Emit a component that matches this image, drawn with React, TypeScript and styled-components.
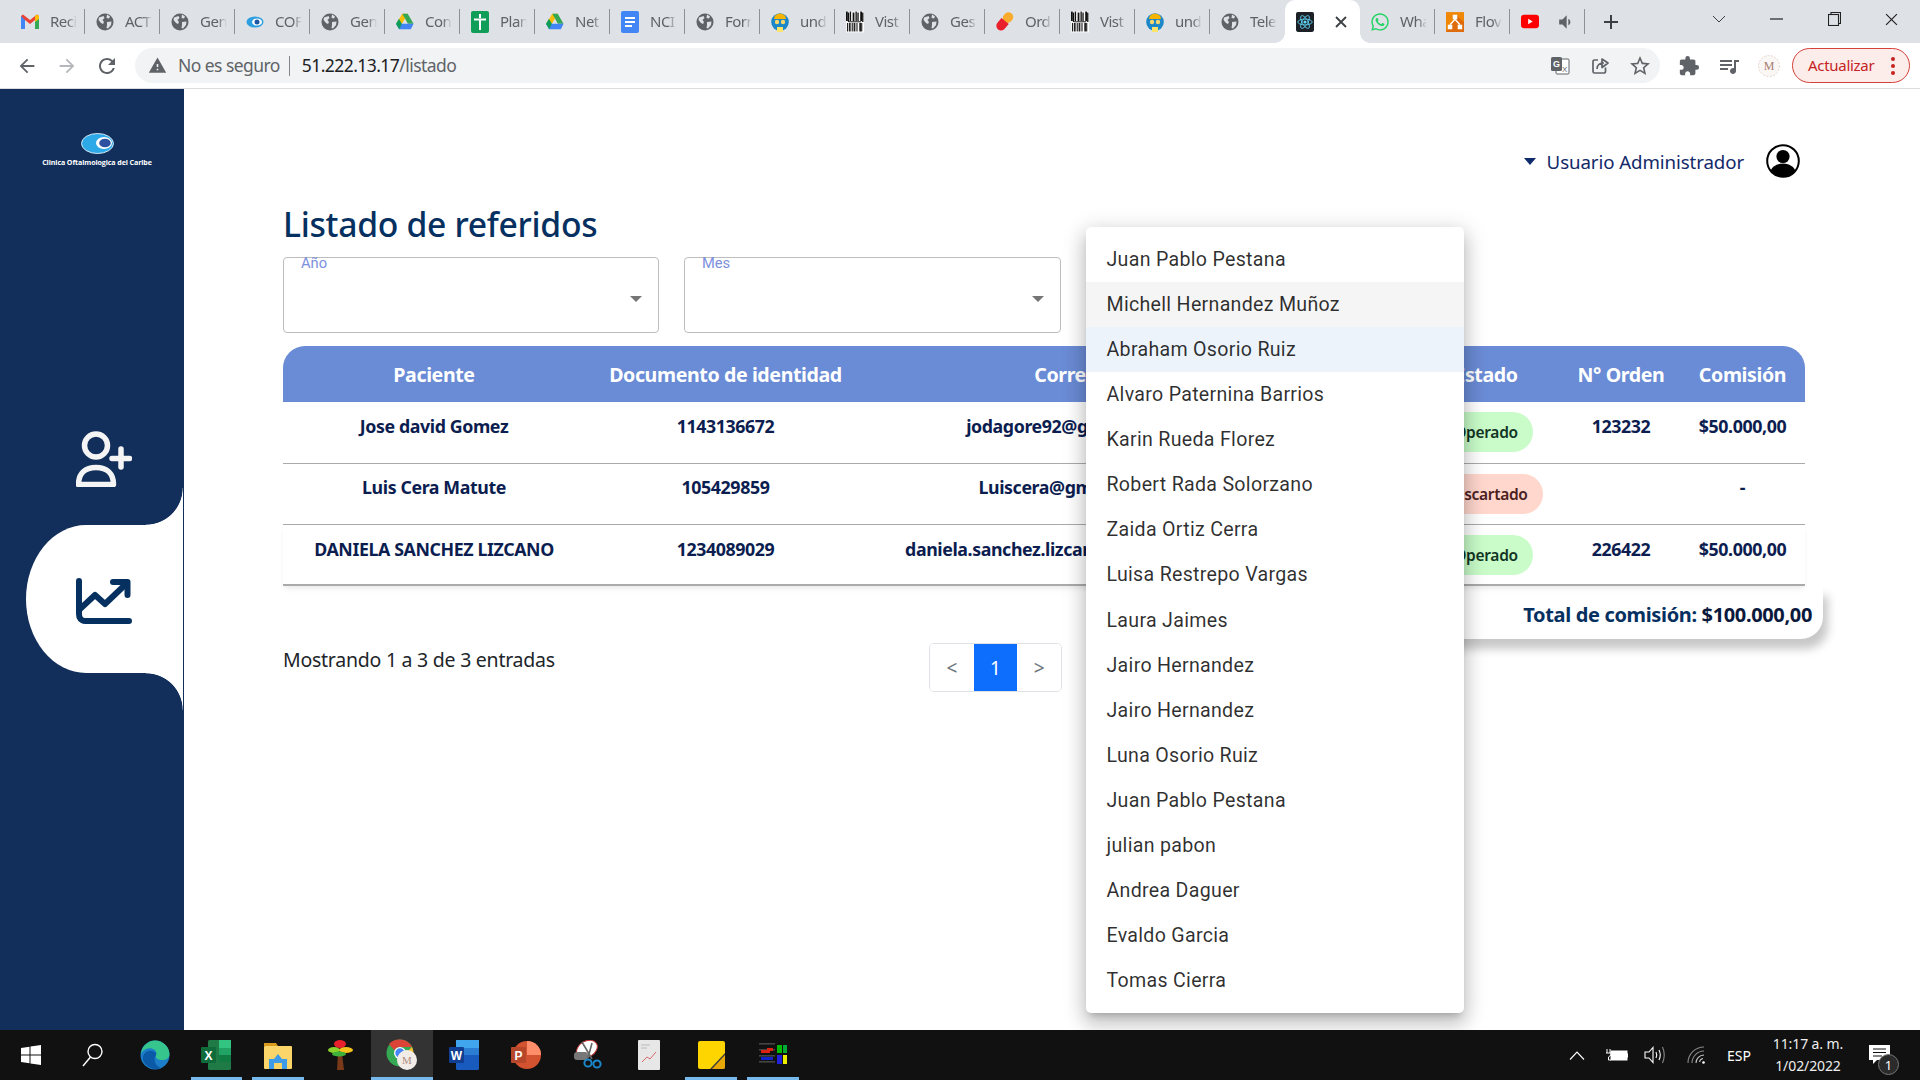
import React from 'react';
import styled, { createGlobalStyle } from 'styled-components';
import { FaWhatsapp } from 'react-icons/fa';
import { MdArrowBack, MdArrowForward, MdRefresh, MdWarning, MdStarBorder, MdExtension, MdQueueMusic, MdVolumeDown } from 'react-icons/md';

const Global = createGlobalStyle`
  html, body { margin: 0; padding: 0; width: 1920px; height: 1080px; overflow: hidden; background: #fff; }
  * { box-sizing: border-box; }
  body { font-family: "Noto Sans", "Open Sans", sans-serif; }
`;

const Page = styled.div`
  position: relative; width: 1920px; height: 1080px; display: flex; flex-direction: column; overflow: hidden;
`;

/* ---------- browser tab strip ---------- */
const TabStrip = styled.div`
  height: 43px; background: #dee1e6; display: flex; padding-left: 10px; flex: none;
`;
const Tab = styled.div<{ $active?: boolean; $noSep?: boolean }>`
  position: relative; width: 75px; height: 43px; display: flex; align-items: center; padding-left: 11px; flex: none;
  background: ${p => (p.$active ? '#fff' : 'transparent')};
  border-radius: ${p => (p.$active ? '10px 10px 0 0' : '0')};
  &::after {
    content: ''; display: ${p => (p.$noSep || p.$active ? 'none' : 'block')};
    position: absolute; right: 0; top: 9px; width: 1px; height: 25px; background: #8e9297;
  }
`;
const TabFlare = styled.span<{ $side: 'left' | 'right' }>`
  position: absolute; bottom: 0; width: 10px; height: 10px;
  ${p => (p.$side === 'left' ? 'left: -10px;' : 'right: -10px;')}
  background: radial-gradient(circle at ${p => (p.$side === 'left' ? '0 0' : '100% 0')}, transparent 9.5px, #fff 10px);
`;
const TabIconBox = styled.span`
  width: 18px; height: 18px; flex: none; display: flex; align-items: center; justify-content: center;
`;
const TabTitle = styled.span`
  margin: -2px 0 0 11px; width: 27px; overflow: hidden; white-space: nowrap; font-size: 15px; color: #5f6368;
  letter-spacing: -0.5px; -webkit-mask-image: linear-gradient(90deg, #000 65%, transparent 100%); mask-image: linear-gradient(90deg, #000 65%, transparent 100%);
`;
const TabClose = styled.span`
  margin-left: 21px; display: flex; align-items: center;
`;
const Speaker = styled.span`
  margin-left: 16px; display: flex; color: #5f6368;
`;
const NewTab = styled.span`
  margin-left: 19px; height: 43px; display: flex; align-items: center;
`;
const WindowControls = styled.div`
  margin-left: auto; display: flex;
`;
const WindowButton = styled.span`
  width: 57.3px; height: 38px; display: flex; align-items: center; justify-content: center;
`;

/* ---------- browser toolbar ---------- */
const Toolbar = styled.div`
  height: 46px; flex: none; background: #fff; border-bottom: 1px solid #dadce0; display: flex; align-items: flex-start; padding: 5px 0 0 7px;
`;
const NavButton = styled.span<{ $color?: string }>`
  width: 40px; height: 35px; display: flex; align-items: center; justify-content: center; flex: none; color: ${p => p.$color ?? '#5f6368'};
`;
const Omnibox = styled.div`
  margin-left: 8px; width: 1525px; height: 35px; background: #f1f3f4; border-radius: 18px; display: flex; align-items: center; padding-left: 13px; flex: none;
  color: #5f6368;
`;
const SecurityText = styled.span`
  margin: -2px 0 0 11px; font-size: 17.5px; color: #5f6368; letter-spacing: -0.56px;
`;
const UrlDivider = styled.span`
  width: 1px; height: 20px; background: #80868b; margin: 0 12px 0 9px;
`;
const UrlHost = styled.span`
  margin-top: -2px; font-size: 17.5px; color: #202124; letter-spacing: -0.56px;
`;
const UrlPath = styled.span`
  margin-top: -2px; font-size: 17.5px; color: #5f6368; letter-spacing: -0.56px;
`;
const OmniIcons = styled.div`
  margin-left: auto; display: flex;
`;
const Extensions = styled.div`
  margin-left: 9px; display: flex;
`;
const UpdateButton = styled.div`
  margin-left: 3px; width: 118px; height: 35px; border: 1.5px solid #d5413a; border-radius: 18px; background: #fcecea; display: flex; align-items: center;
  padding: 0 0 2px 15px; font-size: 15px; color: #c5221f; letter-spacing: -0.3px; position: relative; flex: none;
`;
const UpdateDots = styled.span`
  margin: 2px 14px 0 auto; display: flex; flex-direction: column; gap: 3px;
  i { width: 4px; height: 4px; border-radius: 50%; background: #c5221f; display: block; }
`;

/* ---------- app body ---------- */
const Body = styled.div`
  flex: 1; display: flex; min-height: 0;
`;
const Sidebar = styled.aside`
  width: 184px; flex: none; background: #122f5b; padding-top: 44px; display: flex; flex-direction: column; border-right: 1px solid #122f5b;
`;
const Logo = styled.div`
  display: flex; flex-direction: column; align-items: center; height: 36px; padding-left: 11px;
`;
const LogoName = styled.span`
  font-family: "Open Sans", sans-serif; font-size: 7.1px; font-weight: 700; color: #fff; white-space: nowrap; margin-top: 3px; letter-spacing: -0.1px;
`;
const NavPlain = styled.div`
  margin-top: 262px; padding-left: 76px; height: 56px; line-height: 0;
`;
const NavActive = styled.div`
  position: relative; margin-top: 38px; margin-left: 26px; height: 148px; background: #fff; border-radius: 60px 0 0 60px / 74px 0 0 74px;
  display: flex; align-items: center; padding: 4px 0 0 50px;
  &::before, &::after {
    content: ''; position: absolute; right: 0; width: 37px; height: 37px;
  }
  &::before { top: -37px; background: radial-gradient(ellipse 37px 37px at 0 0, transparent 98%, #fff 100%); }
  &::after { bottom: -37px; background: radial-gradient(ellipse 37px 37px at 0 100%, transparent 98%, #fff 100%); }
`;
const Main = styled.main`
  flex: 1; padding: 56px 115px 0 99px; background: #fff; min-width: 0;
`;
const UserRow = styled.div`
  height: 32px; display: flex; align-items: center; justify-content: flex-end; gap: 0; padding-right: 6px; margin-right: -1px;
`;
const UserCaret = styled.span`
  width: 0; height: 0; border-left: 6px solid transparent; border-right: 6px solid transparent; border-top: 7px solid #0f2a6b; margin-right: 11px;
`;
const UserName = styled.span`
  font-size: 18.7px; color: #12296a; margin-right: 22px; letter-spacing: -0.1px;
`;
const Title = styled.h1`
  margin: 25px 0 0; height: 44px; line-height: 44px; font-size: 33.7px; font-weight: 500; color: #06305f; letter-spacing: -0.3px; white-space: nowrap;
`;
const Filters = styled.div`
  margin-top: 11px; display: flex; gap: 25px;
`;
const Select = styled.div<{ $w: number }>`
  position: relative; width: ${p => p.$w}px; height: 76px; border: 1px solid #bdbdbd; border-radius: 4px;
`;
const SelectLabel = styled.span`
  position: absolute; left: 17px; top: -3px; font-family: Roboto, sans-serif; font-size: 14.7px; color: #7c90dd; line-height: 17px;
`;
const SelectArrow = styled.span`
  position: absolute; right: 16px; top: 38px; width: 0; height: 0; border-left: 6px solid transparent; border-right: 6px solid transparent; border-top: 6px solid #757575;
`;
const Table = styled.div`
  margin-top: 13px; width: 1522px; border-radius: 22px 22px 0 0;
`;
const COLS = '302px 281px 400px 144px 152px 118px 125px';
const HeadRow = styled.div`
  display: grid; grid-template-columns: ${COLS}; height: 56px; align-items: center; background: #6a8bd5; border-radius: 22px 22px 0 0; padding-top: 1px;
`;
const HeadCell = styled.div`
  text-align: center; font-size: 19.6px; font-weight: 700; color: #fff; white-space: nowrap; letter-spacing: -0.4px;
`;
const Row = styled.div<{ $last?: boolean }>`
  display: grid; grid-template-columns: ${COLS}; height: ${p => (p.$last ? 61 : 61.5)}px; background: #fff; position: relative;
  border-bottom: ${p => (p.$last ? '2px solid #aaa' : '1px solid #aaa')};
  box-shadow: ${p => (p.$last ? '0 4px 6px -2px rgba(0,0,0,.1)' : 'none')};
`;
const Cell = styled.div`
  text-align: center; font-size: 17.8px; font-weight: 700; color: #0c1d50; padding-top: 10.5px; line-height: 26px; white-space: nowrap; letter-spacing: -0.4px; overflow: visible;
`;
const PillCell = styled.div`
  padding-top: 10px; display: flex; justify-content: center;
`;
const Pill = styled.span<{ $kind: 'ok' | 'no' }>`
  height: 40px; border-radius: 20px; padding: 0 15px; display: flex; align-items: center; font-size: 15.5px; font-weight: 600; letter-spacing: -0.3px; white-space: nowrap;
  background: ${p => (p.$kind === 'ok' ? '#c9fcc9' : '#ffd7cd')};
  color: ${p => (p.$kind === 'ok' ? '#123524' : '#4a2020')};
`;
const TotalWrap = styled.div`
  display: flex; justify-content: flex-end; margin-right: -18px;
`;
const TotalCard = styled.div`
  width: 520px; height: 53px; background: #fff; border-radius: 0 0 22px 0; padding: 16px 11px 0 0; text-align: right; box-shadow: 5px 10px 10px rgba(0,0,0,.22);
  font-size: 20px; font-weight: 700; color: #06305f; letter-spacing: -0.35px; line-height: 26px; white-space: nowrap;
  b { color: #0b1a3c; font-weight: 700; }
`;
const Footer = styled.div`
  margin-top: 4px; width: 779px; display: flex; justify-content: space-between; align-items: flex-start;
`;
const Entries = styled.span`
  margin-top: 3px; font-size: 19.5px; color: #212529; letter-spacing: -0.25px; line-height: 28px;
`;
const Pager = styled.div`
  display: flex; height: 49px; border: 1px solid #dee2e6; border-radius: 5px; overflow: hidden; width: 133px;
`;
const PageItem = styled.span<{ $on?: boolean }>`
  flex: 1; display: flex; align-items: center; justify-content: center; font-size: 19px;
  background: ${p => (p.$on ? '#0d6efd' : '#fff')}; color: ${p => (p.$on ? '#fff' : '#6c757d')};
`;

/* ---------- open select menu ---------- */
const Menu = styled.ul`
  position: absolute; left: 1086px; top: 227px; width: 378px; margin: 0; padding: 10px 0; list-style: none; background: #fff; border-radius: 5px; z-index: 5;
  box-shadow: 0 6px 7px -4px rgba(0,0,0,.2), 0 11px 18px 2px rgba(0,0,0,.14), 0 4px 22px 4px rgba(0,0,0,.12);
`;
const MenuItem = styled.li<{ $state?: 'hover' | 'selected' }>`
  height: 45.07px; display: flex; align-items: center; padding-left: 20.5px; font-family: Roboto, sans-serif; font-size: 19.6px; letter-spacing: 0.3px; color: rgba(0,0,0,.82);
  background: ${p => (p.$state === 'hover' ? '#f5f5f5' : p.$state === 'selected' ? '#edf3fb' : 'transparent')};
`;

/* ---------- windows taskbar ---------- */
const Taskbar = styled.footer`
  height: 50px; flex: none; background: #111; display: flex; align-items: center; position: relative; z-index: 6; padding-left: -1px;
`;
const TaskItem = styled.span<{ $on?: boolean; $run?: boolean }>`
  position: relative; width: 61.85px; height: 50px; display: flex; align-items: center; justify-content: center; flex: none;
  background: ${p => (p.$on ? '#333' : 'transparent')};
  &::after {
    content: ''; display: ${p => (p.$run ? 'block' : 'none')}; position: absolute; left: 0; right: 0; bottom: 0; height: 3px; background: #76b9ed; margin: 0 ${p => (p.$on ? 0 : 5)}px;
  }
`;
const Tray = styled.div`
  margin-left: auto; display: flex; align-items: center; height: 50px; color: #fff; font-size: 14px; padding-right: 19px;
`;
const TrayIcon = styled.span<{ $w: number }>`
  width: ${p => p.$w}px; display: flex; align-items: center; justify-content: center; flex: none;
`;
const Clock = styled.div`
  width: 98px; text-align: center; line-height: 22px; font-size: 14px; color: #eee; letter-spacing: -0.1px; margin-left: 2px;
`;
const Notify = styled.span`
  position: relative; width: 44px; height: 50px; display: flex; align-items: center; justify-content: center;
`;
const NotifyBadge = styled.span`
  position: absolute; right: 2px; top: 24px; width: 21px; height: 21px; border-radius: 50%; background: #2b2b2b; border: 1.5px solid #777; color: #fff; font-size: 13px; display: flex; align-items: center; justify-content: center;
`;

/* ---------- icons ---------- */
const Globe = () => (
  <svg width="18" height="18" viewBox="0 0 18 18">
    <circle cx="9" cy="9" r="8.5" fill="#5f6368" />
    <path d="M3 4.5 L7.5 3 L8.5 5 L6.5 7 L8 9 L7 11 L5 10 L2.5 7 Z M11 1.5 L14 3.5 L13 5.5 L10.5 5 Z M11 9 L15.5 8.5 L15 12 L12 15.5 L10.5 15 L11 12 Z" fill="#dee1e6" />
  </svg>
);
const Gmail = () => (
  <svg width="18" height="15" viewBox="0 0 18 15">
    <path d="M0 2 L2 0.5 L9 6 L16 .5 L18 2 V15 H14 V6 L9 10 L4 6 V15 H0 Z" fill="#ea4335" />
    <path d="M0 2 V15 H4 V6Z" fill="#4285f4" /><path d="M18 2 V15 H14 V6Z" fill="#34a853" />
    <path d="M14 2 L16 .5 L18 2 V5 L14 8Z" fill="#fbbc04" />
  </svg>
);
const Eye = () => (
  <svg width="18" height="12" viewBox="0 0 18 12">
    <ellipse cx="9" cy="6" rx="8.5" ry="5.5" fill="#2c9fe0" />
    <ellipse cx="11" cy="6" rx="5" ry="3.6" fill="#fff" /><circle cx="11" cy="6" r="2.5" fill="#1c57a5" />
  </svg>
);
const Drive = () => (
  <svg width="20" height="17" viewBox="0 0 20 17">
    <path d="M7 0 H13 L7 10.5 H0.5 Z" fill="#fbbc04" transform="translate(0 0)" />
    <path d="M13 0 L19.5 11 H13.2 L7 0Z" fill="#34a853" />
    <path d="M0 11 H19.5 L16.5 17 H3.5Z" fill="#4285f4" />
    <path d="M3.5 17 L0 11 L3.3 5.4 L6.5 11Z" fill="#0f9d58" />
  </svg>
);
const Sheets = () => (
  <svg width="18" height="22" viewBox="0 0 18 22">
    <rect width="18" height="22" rx="2" fill="#0f9d58" /><path d="M3 7.5 H15 V9.5 H10 V19 H8 V9.5 H3Z M8 3 H10 V7 H8Z" fill="#fff" />
  </svg>
);
const Docs = () => (
  <svg width="18" height="22" viewBox="0 0 18 22">
    <rect width="18" height="22" rx="2" fill="#4285f4" /><path d="M4 6 H14 V8 H4Z M4 10 H14 V12 H4Z M4 14 H11 V16 H4Z" fill="#fff" />
  </svg>
);
const Und = () => (
  <svg width="18" height="20" viewBox="0 0 18 20">
    <circle cx="9" cy="10" r="8.8" fill="#1b87c9" /><path d="M3 7 A6 5.5 0 0 1 15 7 Z" fill="#f5b400" />
    <circle cx="6" cy="10" r="2.2" fill="#f5d76e" /><circle cx="12" cy="10" r="2.2" fill="#f5d76e" /><rect x="6" y="15" width="6" height="5" fill="#ffe46b" />
  </svg>
);
const Barcode = () => (
  <svg width="19" height="22" viewBox="0 0 19 22">
    <rect width="19" height="22" fill="#fff" />
    {[0, 2, 4, 7, 10, 12, 15, 17].map((x, i) => <rect key={x} x={x} y={i % 2 ? 1 : 0} width={i % 3 ? 1.4 : 1.9} height="10" fill="#111" />)}
    {[1, 3, 6, 8, 11, 14, 16].map((x, i) => <rect key={x} x={x} y="12" width={i % 2 ? 1.9 : 1.2} height="9" fill="#222" />)}
    <rect y="10" x="3" width="13" height="1.4" fill="#555" />
  </svg>
);
const Pillule = () => (
  <svg width="20" height="23" viewBox="0 0 20 23">
    <g transform="rotate(40 10 11.5)"><rect x="4.5" y="0" width="10.5" height="12" rx="5" fill="#f9ab2d" /><path d="M4.5 11 H15 V18 A5.2 5.2 0 0 1 4.5 18Z" fill="#e8202c" /></g>
  </svg>
);
const ReactLogo = () => (
  <svg width="20" height="22" viewBox="0 0 20 22">
    <rect width="20" height="22" rx="2" fill="#1c2128" /><circle cx="10" cy="11" r="1.8" fill="#61dafb" />
    <g fill="none" stroke="#61dafb" strokeWidth=".9"><ellipse cx="10" cy="11" rx="8" ry="3.2" /><ellipse cx="10" cy="11" rx="8" ry="3.2" transform="rotate(60 10 11)" /><ellipse cx="10" cy="11" rx="8" ry="3.2" transform="rotate(120 10 11)" /></g>
  </svg>
);
const Flow = () => (
  <svg width="20" height="22" viewBox="0 0 20 22">
    <rect width="20" height="22" fill="#f08705" /><path d="M0 22 L20 22 L20 11 L12 4Z" fill="#df6c0c" />
    <path d="M7.5 3 H12.5 V8 H7.5Z M2 14 H7 V19 H2Z M13 14 H18 V19 H13Z" fill="#fff" /><path d="M10 8 L4.5 14 M10 8 L15.5 14" stroke="#fff" strokeWidth="1.5" />
  </svg>
);
const YouTube = () => (
  <svg width="20" height="15" viewBox="0 0 20 15">
    <rect width="20" height="15" rx="3.5" fill="#f00" /><path d="M8 4.5 L13 7.5 L8 10.5Z" fill="#fff" />
  </svg>
);
const WaWrap = styled.span`
  display: flex; color: #25d366;
`;
const Wa = () => (
  <WaWrap><FaWhatsapp size={20} /></WaWrap>
);
const Share = () => (
  <svg width="20" height="20" viewBox="0 0 20 20" fill="none" stroke="#5f6368" strokeWidth="1.7">
    <path d="M8 4 H4.5 A1.5 1.5 0 0 0 3 5.5 V15.5 A1.5 1.5 0 0 0 4.5 17 H14 A1.5 1.5 0 0 0 15.5 15.5 V11.5" />
    <path d="M7 13 C7 8.5 10 7 14 7 M12 3 L18 7 L12 11.5 Z" strokeLinejoin="round" />
  </svg>
);
const Translate = () => (
  <svg width="20" height="20" viewBox="0 0 20 20">
    <rect x="6" y="3" width="13" height="15" rx="1" fill="#fff" stroke="#5f6368" />
    <rect x="1" y="1" width="11" height="14" rx="1.5" fill="#5f6368" />
    <text x="3" y="11" fontSize="9" fontWeight="700" fill="#fff" fontFamily="Liberation Sans">G</text>
    <text x="12" y="15.5" fontSize="8" fill="#5f6368" fontFamily="Liberation Sans">X</text>
  </svg>
);
const Monogram = () => (
  <svg width="24" height="24" viewBox="0 0 24 24">
    <circle cx="12" cy="12" r="10.5" fill="#fbf7f4" stroke="#e5d5cf" strokeDasharray="2 1.4" />
    <text x="12" y="16" textAnchor="middle" fontSize="12" fill="#a87d72" fontFamily="Liberation Serif">M</text>
  </svg>
);
const CloseX = ({ c = '#3c4043', s = 12, w = 1.8 }: { c?: string; s?: number; w?: number }) => (
  <svg width={s} height={s} viewBox="0 0 12 12"><path d="M1 1 L11 11 M11 1 L1 11" stroke={c} strokeWidth={w} /></svg>
);
const PersonPlus = () => (
  <svg width="56" height="56" viewBox="0 0 56 56" fill="none" stroke="#f4f4f4" strokeLinecap="round">
    <circle cx="20" cy="14.5" r="11.5" strokeWidth="5.5" />
    <path d="M2.5 53.5 C2.5 42 9.5 36.5 20 36.5 C30.5 36.5 37.5 42 37.5 53.5 Z" strokeWidth="5.5" strokeLinejoin="round" />
    <path d="M45 18 V36 M36 27.5 H53.5" strokeWidth="5.5" />
  </svg>
);
const ChartUp = () => (
  <svg width="56" height="46" viewBox="0 0 56 46" fill="none" stroke="#06305f" strokeLinecap="round" strokeLinejoin="round">
    <path d="M3 3 V36 C3 40 5 43 9 43 H53" strokeWidth="6" />
    <path d="M4 31 L19 17 L29 26 L51 5" strokeWidth="6" />
    <path d="M37 4 H51.5 V17" strokeWidth="6" />
  </svg>
);
const UserAvatar = () => (
  <svg width="34" height="34" viewBox="0 0 34 34">
    <defs><clipPath id="uc"><circle cx="17" cy="17" r="15.5" /></clipPath></defs>
    <circle cx="17" cy="17" r="15.8" fill="#fff" stroke="#000" strokeWidth="2" />
    <g clipPath="url(#uc)"><circle cx="17" cy="12.5" r="6.6" fill="#000" /><ellipse cx="17" cy="30" rx="13" ry="10.5" fill="#000" /></g>
  </svg>
);
const LogoEye = () => (
  <svg width="33" height="21" viewBox="0 0 33 21">
    <ellipse cx="16.5" cy="10.5" rx="16" ry="10" fill="#2ea9e8" stroke="#e8f4fb" strokeWidth=".9" />
    <ellipse cx="23" cy="10" rx="8" ry="6" fill="#fff" /><ellipse cx="24" cy="10" rx="5.8" ry="4.3" fill="#2d50a0" />
  </svg>
);

/* taskbar */
const WinLogo = () => (
  <svg width="20" height="20" viewBox="0 0 20 20" fill="#fff"><path d="M0 3 L8.5 1.7 V9.5 H0Z M9.5 1.5 L20 0 V9.5 H9.5Z M0 10.5 H8.5 V18.3 L0 17Z M9.5 10.5 H20 V20 L9.5 18.5Z" /></svg>
);
const SearchIco = () => (
  <svg width="21" height="24" viewBox="0 0 21 24" fill="none" stroke="#fff" strokeWidth="1.4"><circle cx="13" cy="8.5" r="7" /><path d="M8.5 14 L1 23" /></svg>
);
const Edge = () => (
  <svg width="30" height="30" viewBox="0 0 30 30">
    <circle cx="15" cy="15" r="14.5" fill="#1c7ec9" />
    <path d="M1 14 C2 5 9 .5 15 .5 C24 .5 29.5 8 29.5 14 C29.5 19 25 20 22 20 C18 20 15 18.5 16 15 C18 10 11 7 6 9 C3 10 2 12 1 14Z" fill="#37c58e" />
    <path d="M16 15 C13 19 15 26 21 28 C15 31 6 28 3 20 C2 13 8 10 12 11 C15 12 17 13 16 15Z" fill="#0b5aa8" />
  </svg>
);
const Excel = () => (
  <svg width="30" height="30" viewBox="0 0 30 30">
    <rect x="7" width="23" height="30" rx="1.5" fill="#1f7a46" /><rect x="18" width="12" height="8" fill="#33c481" /><rect x="18" y="8" width="12" height="7" fill="#21a366" /><rect x="18" y="15" width="12" height="7" fill="#107c41" />
    <rect y="7" width="15" height="16" rx="1" fill="#0f6b3a" /><text x="7.5" y="19.5" textAnchor="middle" fontSize="12" fontWeight="700" fill="#fff" fontFamily="Liberation Sans">X</text>
  </svg>
);
const Folder = () => (
  <svg width="28" height="28" viewBox="0 0 28 28">
    <path d="M0 2 H12 L14 5 H0Z" fill="#d99b1e" /><rect y="5" width="28" height="23" rx="1" fill="#fbd569" />
    <path d="M5 28 V18 H10 L14 13 L18 18 H23 V28 H18 V22 H10 V28Z" fill="#3d9be9" />
  </svg>
);
const Tree = () => (
  <svg width="26" height="30" viewBox="0 0 26 30">
    <path d="M10 30 L11 14 H15 L17 30Z" fill="#7a3a1a" /><ellipse cx="13" cy="4" rx="6" ry="4" fill="#e8202c" /><ellipse cx="7" cy="10" rx="6" ry="3" fill="#8bd12b" /><ellipse cx="19" cy="10" rx="7" ry="3" fill="#f3c21c" /><ellipse cx="12" cy="14" rx="7" ry="2.5" fill="#3eb23a" />
  </svg>
);
const Chrome = () => (
  <svg width="32" height="32" viewBox="0 0 32 32">
    <circle cx="14" cy="14" r="13.5" fill="#34a853" />
    <path d="M14 .5 A13.5 13.5 0 0 1 26 8 H14 A6 6 0 0 0 8.5 11.5 L3 5 A13.5 13.5 0 0 1 14 .5Z" fill="#db4437" />
    <path d="M26 8 A13.5 13.5 0 0 1 16 27.3 L20 14 Z" fill="#fbc02d" />
    <circle cx="14" cy="14" r="6" fill="#fff" /><circle cx="14" cy="14" r="4.7" fill="#4285f4" />
    <circle cx="21" cy="21" r="10" fill="#f2ece8" /><text x="21" y="25" textAnchor="middle" fontSize="11" fill="#b08d80" fontFamily="Liberation Serif">M</text>
  </svg>
);
const Word = () => (
  <svg width="30" height="30" viewBox="0 0 30 30">
    <rect x="7" width="23" height="30" rx="1.5" fill="#185abd" /><rect x="7" width="23" height="8" fill="#41a5ee" /><rect x="7" y="8" width="23" height="7" fill="#2b7cd3" />
    <rect y="7" width="15" height="16" rx="1" fill="#103f91" /><text x="7.5" y="19.5" textAnchor="middle" fontSize="12" fontWeight="700" fill="#fff" fontFamily="Liberation Sans">W</text>
  </svg>
);
const Ppt = () => (
  <svg width="30" height="30" viewBox="0 0 30 30">
    <circle cx="16" cy="15" r="14" fill="#d35230" /><path d="M16 1 A14 14 0 0 1 30 15 H16Z" fill="#ff8f6b" />
    <rect y="7" width="15" height="16" rx="1" fill="#b7472a" /><text x="7.5" y="19.5" textAnchor="middle" fontSize="12" fontWeight="700" fill="#fff" fontFamily="Liberation Sans">P</text>
  </svg>
);
const Snip = () => (
  <svg width="28" height="30" viewBox="0 0 28 30">
    <ellipse cx="13" cy="9" rx="11" ry="8" fill="#fff" stroke="#b33" strokeWidth="1" transform="rotate(-30 13 9)" /><rect x="0" y="12" width="14" height="8" rx="3" fill="#777" />
    <path d="M8 2 L18 19 M18 3 L14 18" stroke="#666" strokeWidth="1.6" /><circle cx="14" cy="23" r="3.6" fill="none" stroke="#1b87c9" strokeWidth="2" /><circle cx="23" cy="24" r="3.6" fill="none" stroke="#1b87c9" strokeWidth="2" />
  </svg>
);
const Sheet = () => (
  <svg width="22" height="30" viewBox="0 0 22 30">
    <rect width="22" height="30" rx="1" fill="#e7e7e7" /><path d="M4 22 L9 17 L12 19 L18 12" stroke="#d76b6b" fill="none" strokeWidth="1" /><path d="M3 5 H12 M3 8 H9" stroke="#bbb" />
  </svg>
);
const Sticky = () => (
  <svg width="27" height="28" viewBox="0 0 27 28"><rect width="27" height="28" rx="2" fill="#ffd500" /><path d="M27 12 V28 H12Z" fill="#3c3c3c" /><path d="M27 14 L14 28 H25 A2 2 0 0 0 27 26Z" fill="#e8a806" /></svg>
);
const Rar = () => (
  <svg width="28" height="24" viewBox="0 0 28 24">
    {[0, 6, 12, 18].map(y => <rect key={y} x="0" y={y} width="16" height="1.6" fill="#444" />)}
    <rect x="2" y="7" width="9" height="3" fill="#d21" /><rect x="8" y="5" width="6" height="3" fill="#d21" /><rect x="2" y="14" width="12" height="3" fill="#12c" />
    <rect x="18" y="2" width="5" height="8" fill="#0b0" /><rect x="24" y="2" width="4" height="8" fill="#0a3" /><rect x="18" y="12" width="5" height="9" fill="#22d" /><rect x="24" y="12" width="4" height="9" fill="#ee0" />
  </svg>
);
const Battery = () => (
  <svg width="22" height="14" viewBox="0 0 22 14"><rect x="5" y="3" width="16" height="9" fill="#fff" stroke="#fff" /><rect x="21" y="5.5" width="1" height="4" fill="#fff" /><path d="M1 1 V5 M4 1 V5 M0 5 H5 V7 L2.5 9 V12 H5" stroke="#fff" fill="none" /></svg>
);
const Volume = () => (
  <svg width="22" height="18" viewBox="0 0 22 18" fill="none" stroke="#fff" strokeWidth="1.1"><path d="M1 6 H5 L9 1.5 V16.5 L5 12 H1Z" /><path d="M12 6 Q13.5 9 12 12 M15 4 Q17.5 9 15 14" /><path d="M18.5 1 Q22 9 18.5 17" stroke="#888" /></svg>
);
const Wifi = () => (
  <svg width="20" height="18" viewBox="0 0 20 18" fill="none" stroke="#ccc" strokeWidth="1.1"><path d="M1 17 A16 16 0 0 1 17 1 M5 17 A12 12 0 0 1 17 5" stroke="#888" /><path d="M9 17 A8 8 0 0 1 17 9 M12.5 16 A4.5 4.5 0 0 1 16 12.5" /><circle cx="16.5" cy="16.5" r="1.3" fill="#fff" stroke="none" /></svg>
);
const NotifyIco = () => (
  <svg width="21" height="21" viewBox="0 0 21 21"><path d="M0 0 H21 V15 H8 L4 19 V15 H0Z" fill="#fff" /><path d="M4 4 H17 M4 7.5 H17 M4 11 H13" stroke="#111" strokeWidth="1" /></svg>
);

const tabs: { t: string; i: React.ReactNode; noSep?: boolean; active?: boolean }[] = [
  { t: 'Reci', i: <Gmail /> }, { t: 'ACTI', i: <Globe /> }, { t: 'Gen', i: <Globe /> }, { t: 'COF', i: <Eye /> }, { t: 'Gen', i: <Globe /> },
  { t: 'Con', i: <Drive /> }, { t: 'Plan', i: <Sheets /> }, { t: 'Net', i: <Drive /> }, { t: 'NCI', i: <Docs /> }, { t: 'Forr', i: <Globe /> },
  { t: 'und', i: <Und /> }, { t: 'Vist', i: <Barcode /> }, { t: 'Ges', i: <Globe /> }, { t: 'Ord', i: <Pillule /> }, { t: 'Vist', i: <Barcode /> },
  { t: 'und', i: <Und /> }, { t: 'Tele', i: <Globe />, noSep: true }, { t: '', i: <ReactLogo />, active: true }, { t: 'Wha', i: <Wa /> }, { t: 'Flov', i: <Flow /> },
];

const rows = [
  { n: 'Jose david Gomez', d: '1143136672', c: 'jodagore92@gmail.com', s: 'Operado', k: 'ok' as const, o: '123232', m: '$50.000,00' },
  { n: 'Luis Cera Matute', d: '105429859', c: 'Luiscera@gmail.com', s: 'Descartado', k: 'no' as const, o: '', m: '-' },
  { n: 'DANIELA SANCHEZ LIZCANO', d: '1234089029', c: 'daniela.sanchez.lizcano@hotmail.com', s: 'Operado', k: 'ok' as const, o: '226422', m: '$50.000,00' },
];

const names = ['Juan Pablo Pestana', 'Michell Hernandez Muñoz', 'Abraham Osorio Ruiz', 'Alvaro Paternina Barrios', 'Karin Rueda Florez', 'Robert Rada Solorzano', 'Zaida Ortiz Cerra', 'Luisa Restrepo Vargas', 'Laura Jaimes', 'Jairo Hernandez', 'Jairo Hernandez', 'Luna Osorio Ruiz', 'Juan Pablo Pestana', 'julian pabon', 'Andrea Daguer', 'Evaldo Garcia', 'Tomas Cierra'];

const task: { i: React.ReactNode; on?: boolean; run?: boolean }[] = [
  { i: <WinLogo /> }, { i: <SearchIco /> }, { i: <Edge /> }, { i: <Excel />, run: true }, { i: <Folder />, run: true }, { i: <Tree /> }, { i: <Chrome />, on: true, run: true },
  { i: <Word /> }, { i: <Ppt /> }, { i: <Snip /> }, { i: <Sheet /> }, { i: <Sticky />, run: true }, { i: <Rar />, run: true },
];

export default function App() {
  return (
    <Page>
      <Global />
      <TabStrip>
        {tabs.map((t, idx) => (
          <Tab key={idx} $active={t.active} $noSep={t.noSep}>
            {t.active && <><TabFlare $side="left" /><TabFlare $side="right" /></>}
            <TabIconBox>{t.i}</TabIconBox>
            {t.active ? <TabClose><CloseX /></TabClose> : <TabTitle>{t.t}</TabTitle>}
          </Tab>
        ))}
        <Tab>
          <TabIconBox><YouTube /></TabIconBox>
          <Speaker><MdVolumeDown size={20} /></Speaker>
        </Tab>
        <NewTab>
          <svg width="14" height="14" viewBox="0 0 14 14"><path d="M7 0 V14 M0 7 H14" stroke="#3c4043" strokeWidth="2" /></svg>
        </NewTab>
        <WindowControls>
          <WindowButton><svg width="14" height="8" viewBox="0 0 14 8" fill="none"><path d="M1 1 L7 7 L13 1" stroke="#3c4043" /></svg></WindowButton>
          <WindowButton><svg width="13" height="2" viewBox="0 0 13 2"><path d="M0 1 H13" stroke="#222" strokeWidth="1.2" /></svg></WindowButton>
          <WindowButton><svg width="13" height="14" viewBox="0 0 13 14" fill="none" stroke="#222" strokeWidth="1.1"><rect x=".5" y="2.5" width="10" height="11" /><path d="M3 2.5 V.5 H12.5 V11.5 H10.5" /></svg></WindowButton>
          <WindowButton><CloseX c="#222" s={13} w={1.1} /></WindowButton>
        </WindowControls>
      </TabStrip>

      <Toolbar>
        <NavButton><MdArrowBack size={22} /></NavButton>
        <NavButton $color="#b4b7bb"><MdArrowForward size={22} /></NavButton>
        <NavButton><MdRefresh size={24} /></NavButton>
        <Omnibox>
          <MdWarning size={19} />
          <SecurityText>No es seguro</SecurityText>
          <UrlDivider />
          <UrlHost>51.222.13.17</UrlHost><UrlPath>/listado</UrlPath>
          <OmniIcons>
            <NavButton><Translate /></NavButton>
            <NavButton><Share /></NavButton>
            <NavButton><MdStarBorder size={24} /></NavButton>
          </OmniIcons>
        </Omnibox>
        <Extensions>
          <NavButton><MdExtension size={22} /></NavButton>
          <NavButton><MdQueueMusic size={24} /></NavButton>
          <NavButton><Monogram /></NavButton>
        </Extensions>
        <UpdateButton>Actualizar<UpdateDots><i /><i /><i /></UpdateDots></UpdateButton>
      </Toolbar>

      <Body>
        <Sidebar>
          <Logo><LogoEye /><LogoName>Clinica Oftalmologica del Caribe</LogoName></Logo>
          <NavPlain><PersonPlus /></NavPlain>
          <NavActive><ChartUp /></NavActive>
        </Sidebar>
        <Main>
          <UserRow>
            <UserCaret />
            <UserName>Usuario Administrador</UserName>
            <UserAvatar />
          </UserRow>
          <Title>Listado de referidos</Title>
          <Filters>
            <Select $w={376}><SelectLabel>Año</SelectLabel><SelectArrow /></Select>
            <Select $w={377}><SelectLabel>Mes</SelectLabel><SelectArrow /></Select>
          </Filters>
          <Table>
            <HeadRow>
              <HeadCell>Paciente</HeadCell>
              <HeadCell>Documento de identidad</HeadCell>
              <HeadCell>Correo</HeadCell>
              <HeadCell />
              <HeadCell>Estado</HeadCell>
              <HeadCell>N° Orden</HeadCell>
              <HeadCell>Comisión</HeadCell>
            </HeadRow>
            {rows.map((r, i) => (
              <Row key={r.d} $last={i === rows.length - 1}>
                <Cell>{r.n}</Cell>
                <Cell>{r.d}</Cell>
                <Cell>{r.c}</Cell>
                <Cell />
                <PillCell><Pill $kind={r.k}>{r.s}</Pill></PillCell>
                <Cell>{r.o}</Cell>
                <Cell>{r.m}</Cell>
              </Row>
            ))}
          </Table>
          <TotalWrap>
            <TotalCard>Total de comisión: <b>$100.000,00</b></TotalCard>
          </TotalWrap>
          <Footer>
            <Entries>Mostrando 1 a 3 de 3 entradas</Entries>
            <Pager>
              <PageItem>&lt;</PageItem>
              <PageItem $on>1</PageItem>
              <PageItem>&gt;</PageItem>
            </Pager>
          </Footer>
        </Main>
      </Body>

      <Taskbar>
        {task.map((t, i) => <TaskItem key={i} $on={t.on} $run={t.run}>{t.i}</TaskItem>)}
        <Tray>
          <TrayIcon $w={40}><svg width="16" height="9" viewBox="0 0 16 9" fill="none"><path d="M1 8.5 L8 1 L15 8.5" stroke="#fff" strokeWidth="1.1" /></svg></TrayIcon>
          <TrayIcon $w={40}><Battery /></TrayIcon>
          <TrayIcon $w={36}><Volume /></TrayIcon>
          <TrayIcon $w={48}><Wifi /></TrayIcon>
          <TrayIcon $w={36}>ESP</TrayIcon>
          <Clock>11:17 a. m.<br />1/02/2022</Clock>
          <Notify><NotifyIco /><NotifyBadge>1</NotifyBadge></Notify>
        </Tray>
      </Taskbar>

      <Menu>
        {names.map((n, i) => <MenuItem key={i} $state={i === 1 ? 'hover' : i === 2 ? 'selected' : undefined}>{n}</MenuItem>)}
      </Menu>
    </Page>
  );
}
